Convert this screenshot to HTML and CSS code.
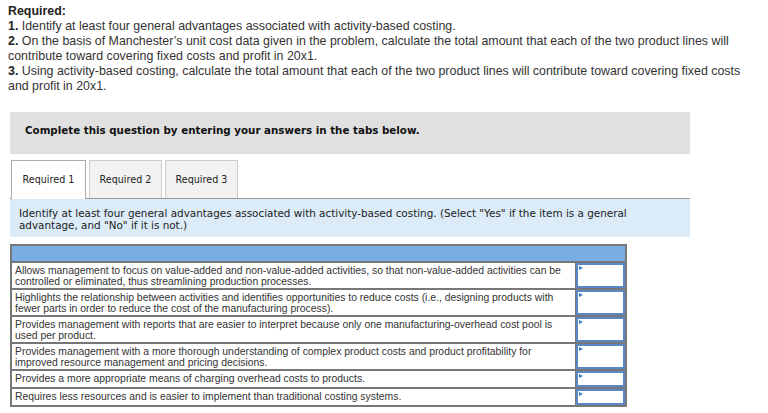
FILE: index.html
```html
<!DOCTYPE html>
<html lang="en">
<head>
    <meta charset="UTF-8">
    <title>Activity-based costing</title>
    <link rel="stylesheet" href="styles.css">
</head>
<body>
    <div class="question">
        <p class="req-title">Required:</p>
        <p><b>1.</b> Identify at least four general advantages associated with activity-based costing.</p>
        <p><b>2.</b> On the basis of Manchester’s unit cost data given in the problem, calculate the total amount that each of the two product lines will contribute toward covering fixed costs and profit in 20x1.</p>
        <p><b>3.</b> Using activity-based costing, calculate the total amount that each of the two product lines will contribute toward covering fixed costs and profit in 20x1.</p>
    </div>

    <div class="panel">
        <div class="panel-head">Complete this question by entering your answers in the tabs below.</div>

        <div class="tabs">
            <div class="tab active">Required 1</div>
            <div class="tab">Required 2</div>
            <div class="tab">Required 3</div>
        </div>

        <div class="instructions">
            Identify at least four general advantages associated with activity-based costing. (Select "Yes" if the item is a general advantage, and "No" if it is not.)
        </div>

        <table class="answers">
            <tr class="head-row"><th colspan="2"></th></tr>
            <tr>
                <td class="item">Allows management to focus on value-added and non-value-added activities, so that non-value-added activities can be controlled or eliminated, thus streamlining production processes.</td>
                <td class="pick"><div class="select"></div></td>
            </tr>
            <tr>
                <td class="item">Highlights the relationship between activities and identifies opportunities to reduce costs (i.e., designing products with fewer parts in order to reduce the cost of the manufacturing process).</td>
                <td class="pick"><div class="select"></div></td>
            </tr>
            <tr>
                <td class="item">Provides management with reports that are easier to interpret because only one manufacturing-overhead cost pool is used per product.</td>
                <td class="pick"><div class="select"></div></td>
            </tr>
            <tr>
                <td class="item">Provides management with a more thorough understanding of complex product costs and product profitability for improved resource management and pricing decisions.</td>
                <td class="pick"><div class="select"></div></td>
            </tr>
            <tr>
                <td class="item">Provides a more appropriate means of charging overhead costs to products.</td>
                <td class="pick"><div class="select"></div></td>
            </tr>
            <tr>
                <td class="item">Requires less resources and is easier to implement than traditional costing systems.</td>
                <td class="pick"><div class="select"></div></td>
            </tr>
        </table>
    </div>
</body>
</html>
```

FILE: styles.css
```css
* {
    margin: 0;
    padding: 0;
    box-sizing: border-box;
}

body {
    background: #fff;
    color: #333;
    padding: 4px 8px 0 8px;
    font-family: "Liberation Sans", Arial, sans-serif;
}

.question {
    font-family: "Liberation Sans", Arial, sans-serif;
    font-size: 12.4px;
    line-height: 15px;
    color: #333;
    width: 754px;
}

.question b,
.req-title {
    font-weight: bold;
    color: #222;
}

.panel {
    margin: 18px 0 0 2px;
    width: 680px;
}

.panel-head {
    background: #e0e0e0;
    height: 42px;
    padding: 10px 15px 0 15px;
    font-family: "DejaVu Sans", Verdana, sans-serif;
    font-size: 10.3px;
    font-weight: bold;
    color: #111;
    line-height: 16px;
}

.tabs {
    display: flex;
    gap: 3px;
    margin-top: 6px;
    padding-left: 1px;
    position: relative;
    z-index: 1;
}

.tab {
    height: 38px;
    line-height: 38px;
    font-family: "DejaVu Sans", Verdana, sans-serif;
    font-size: 9.6px;
    white-space: nowrap;
    color: #222;
    background: #f2f2f2;
    border: 1px solid #ccc;
    border-bottom: none;
    width: 73px;
    text-align: center;
}

.tab.active {
    background: #fff;
    border-color: #aaa;
    width: 75px;
    height: 39px;
    margin-bottom: -1px;
}

.instructions {
    background: #dbebf8;
    border-top: 1px solid #999;
    padding: 8px 9px 0 9px;
    height: 39px;
    font-family: "DejaVu Sans", Verdana, sans-serif;
    font-size: 10.4px;
    line-height: 12px;
    color: #222;
}

.answers {
    margin-top: 7px;
    width: 617px;
    border-collapse: collapse;
    border: 2px solid #777;
    font-family: "Liberation Sans", Arial, sans-serif;
    font-size: 10.4px;
    line-height: 11px;
    color: #333;
}

.head-row th {
    background: #78aee3;
    height: 17px;
    border-bottom: 2px solid #777;
}

.answers td {
    border-bottom: 2px solid #777;
    vertical-align: top;
}

.answers tr:last-child td {
    border-bottom: none;
}

.item {
    padding: 2px 3px 1px 3px;
    border-right: 1px solid #777;
}

.pick {
    width: 51px;
    padding: 0;
    height: 1px;
}

.select {
    position: relative;
    height: 100%;
    min-height: 16px;
    border: 2px solid #5b87c5;
    background: #fff;
}

.select::before {
    content: "";
    position: absolute;
    top: 1px;
    left: 1px;
    border-left: 4px solid #3a78c8;
    border-top: 2px solid transparent;
    border-bottom: 2px solid transparent;
}
```
